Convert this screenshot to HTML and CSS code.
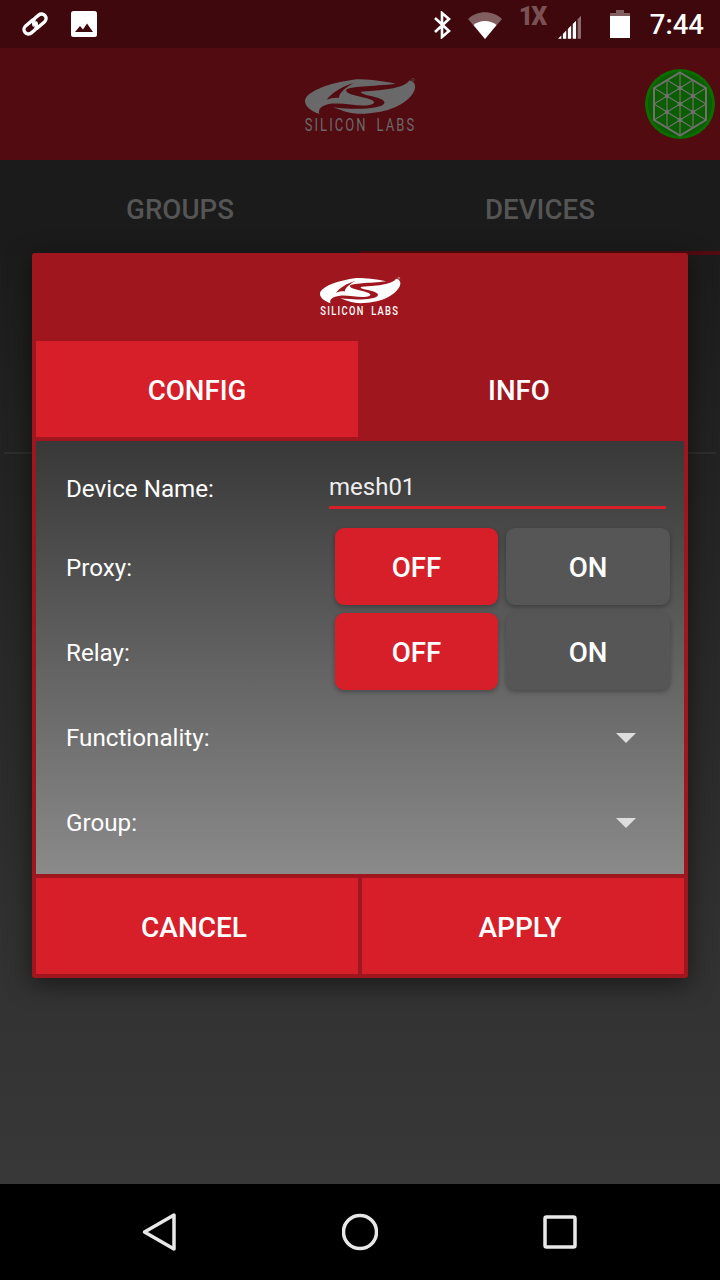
FILE: index.html
```html
<!DOCTYPE html>
<html lang="en">
<head>
    <meta charset="UTF-8">
    <meta name="viewport" content="width=device-width, initial-scale=1.0">
    <title>Silicon Labs Mesh</title>
    <link rel="stylesheet" href="styles.css">
</head>
<body>

<svg class="defs" width="0" height="0">
    <symbol id="swoosh" viewBox="47 22 331 112">
        <path fill-rule="evenodd" d="M318 40C270 30 220 26 195 27C125 36 47 62 47 92C47 108 68 122 90 130C84 116 98 102 128 99C165 96 205 108 235 104C258 100 258 92 240 86C210 76 165 72 170 58C175 48 250 48 318 40ZM112 88C125 68 155 50 192 38C168 52 150 66 148 82C135 80 122 83 112 88Z"/>
        <path d="M358 30C345 52 290 58 218 63C208 65 214 69 232 74C272 82 290 90 282 100C272 112 210 120 130 110C170 124 190 134 240 128C270 126 300 118 320 108C360 90 385 55 372 38C368 33 363 30 358 30Z"/>
        <circle cx="369" cy="28" r="4" fill="none" stroke="currentColor" stroke-width="1.500"/>
    </symbol>
</svg>

<div class="screen">
    <div class="status-bar">
        <div class="status-left">
            <svg class="ic-link" viewBox="0 0 28 24">
                <g transform="translate(14 12) rotate(-40)" fill="none" stroke="#fff" stroke-width="3.400" stroke-linecap="round">
                    <path d="M1 -4.500H-8.500a4.500 4.500 0 0 0 0 9H-4C-1 4.500 0 2 1.500 0"/>
                    <path d="M-1 4.500H8.500a4.500 4.500 0 0 0 0 -9H4C1 -4.500 0 -2 -1.500 0"/>
                </g>
            </svg>
            <svg class="ic-image" viewBox="0 0 26 26"><rect width="26" height="26" rx="2.500" fill="#fff"/><path d="M4 21L9 15L12 18.500L16 12.500L22 21Z" fill="#3e080c"/></svg>
        </div>
        <div class="status-right">
            <svg class="ic-bt" viewBox="0 0 20 28"><path d="M2 7L16 20L9 26V2L16 8L2 21" fill="none" stroke="#fff" stroke-width="2.600"/></svg>
            <svg class="ic-wifi" viewBox="0 0 36 29"><path d="M1 9C10 0 26 0 35 9L18 29Z" fill="#fff" fill-opacity=".35"/><path d="M6.500 15C13 9.500 23 9.500 29.500 15L18 29Z" fill="#fff"/></svg>
            <span class="net-type">1X</span>
            <svg class="ic-signal" viewBox="0 0 23.400 24"><path d="M0 24L3.400 20.600V24ZM5 24V19L8.400 15.600V24ZM10 24V14L13.400 10.600V24ZM15 24V9L18.400 5.600V24Z" fill="#fff"/><path d="M20 24V4L23.400 0.600V24Z" fill="#fff" fill-opacity=".4"/></svg>
            <svg class="ic-battery" viewBox="0 0 20 28"><path d="M6 0H14V3H20V8H0V3H6Z" fill="#fff" fill-opacity=".35"/><rect y="6" width="20" height="22" fill="#fff"/></svg>
            <span class="clock">7:44</span>
        </div>
    </div>

    <div class="app-bar">
        <div class="logo logo-dim">
            <svg class="swoosh"><use href="#swoosh"/></svg>
            <span class="logo-text">SILICON LABS</span>
        </div>
        <svg class="mesh-badge" viewBox="0 0 70 70">
            <circle cx="35" cy="35" r="35" fill="#0b6c00"/>
            <circle cx="35" cy="35" r="32" fill="#0c5c00"/>
            <g fill="none" stroke="#707070" stroke-width="1.200">
                <path d="M35 3.500L61 19V51L35 66.500L9 51V19Z" stroke-width="2"/>
                <path d="M22 11V59M35 3.500V66.500M48 11V59M9 19L61 51M22 11L61 35M9 35L48 59M9 51L61 19M22 59L61 35M9 35L48 11"/>
            </g>
            <g fill="#707070">
                <circle cx="22" cy="27" r="2.200"/><circle cx="35" cy="19" r="2.200"/><circle cx="48" cy="27" r="2.200"/>
                <circle cx="35" cy="35" r="2.200"/><circle cx="22" cy="43" r="2.200"/><circle cx="48" cy="43" r="2.200"/>
                <circle cx="35" cy="51" r="2.200"/>
            </g>
        </svg>
    </div>

    <div class="main-tabs">
        <div class="main-tab">GROUPS</div>
        <div class="main-tab main-tab-active">DEVICES</div>
    </div>

    <div class="content">
        <div class="bg-card"></div>
    </div>

    <div class="nav-bar">
        <svg class="nav-icon" viewBox="0 0 36 40"><path d="M2.500 20L32 3V37Z" fill="none" stroke="#e8e8e8" stroke-width="3.500" stroke-linejoin="round"/></svg>
        <svg class="nav-icon" viewBox="0 0 36 40"><circle cx="18" cy="20" r="16.500" fill="none" stroke="#e8e8e8" stroke-width="3.500"/></svg>
        <svg class="nav-icon" viewBox="0 0 36 40"><rect x="3" y="5" width="30" height="30" rx="1.500" fill="none" stroke="#e8e8e8" stroke-width="3.500"/></svg>
    </div>
</div>

<div class="dialog">
    <div class="dialog-head">
        <div class="logo logo-small">
            <svg class="swoosh"><use href="#swoosh"/></svg>
            <span class="logo-text">SILICON LABS</span>
        </div>
    </div>
    <div class="dialog-tabs">
        <div class="dialog-tab dialog-tab-active">CONFIG</div>
        <div class="dialog-tab">INFO</div>
    </div>
    <div class="dialog-body">
        <div class="row row-name">
            <span class="row-label">Device Name:</span>
            <div class="name-input">mesh01</div>
        </div>
        <div class="row row-toggle">
            <span class="row-label">Proxy:</span>
            <div class="toggle">
                <button class="toggle-btn toggle-on">OFF</button>
                <button class="toggle-btn">ON</button>
            </div>
        </div>
        <div class="row row-toggle">
            <span class="row-label">Relay:</span>
            <div class="toggle">
                <button class="toggle-btn toggle-on">OFF</button>
                <button class="toggle-btn">ON</button>
            </div>
        </div>
        <div class="row row-select">
            <span class="row-label">Functionality:</span>
            <span class="arrow"></span>
        </div>
        <div class="row row-select">
            <span class="row-label">Group:</span>
            <span class="arrow"></span>
        </div>
    </div>
    <div class="dialog-actions">
        <button class="action-btn">CANCEL</button>
        <button class="action-btn">APPLY</button>
    </div>
</div>

</body>
</html>
```

FILE: styles.css
```css
* {
    box-sizing: border-box;
}
body {
    margin: 0;
    width: 720px;
    height: 1280px;
    overflow: hidden;
    position: relative;
    font-family: Roboto, sans-serif;
    color: white;
}
button {
    font-family: inherit;
    border: none;
    color: white;
    padding: 0;
}
.defs {
    position: absolute;
}
.screen {
    height: 1280px;
    display: flex;
    flex-direction: column;
    background: #1c1c1c;
}

/* status bar */
.status-bar {
    height: 48px;
    background: #3e080c;
    display: flex;
    justify-content: space-between;
    align-items: center;
}
.status-left {
    display: flex;
    align-items: center;
    padding-left: 21px;
}
.ic-link {
    width: 28px;
    height: 24px;
    margin-right: 22px;
}
.ic-image {
    width: 26px;
    height: 26px;
}
.status-right {
    display: flex;
    align-items: center;
    padding-right: 16px;
    height: 48px;
}
.ic-bt {
    width: 20px;
    height: 28px;
    margin-right: 14px;
    margin-top: 1px;
}
.ic-wifi {
    width: 36px;
    height: 29px;
}
.net-type {
    font-size: 25px;
    font-weight: 900;
    letter-spacing: -2px;
    color: #7a5154;
    width: 26px;
    margin: -16px 0 0 16px;
}
.ic-signal {
    width: 23px;
    height: 24px;
    margin: 6px 0 0 13px;
}
.ic-battery {
    width: 20px;
    height: 28px;
    margin: 0 20px 0 29px;
}
.clock {
    font-size: 27.500px;
    font-weight: 500;
}

/* app bar */
.app-bar {
    height: 112px;
    background: #520b11;
    position: relative;
    display: flex;
    justify-content: center;
    padding-top: 29px;
}
.logo {
    display: flex;
    flex-direction: column;
    align-items: center;
}
.logo-dim {
    width: 112px;
    color: #696969;
}
.logo-dim .swoosh {
    width: 111px;
    height: 39px;
}
.logo-dim .logo-text {
    font-size: 18px;
    letter-spacing: 2.900px;
    word-spacing: 5px;
    line-height: 17px;
}
.swoosh {
    fill: currentColor;
    display: block;
}
.logo-text {
    white-space: nowrap;
    transform: scaleX(0.72);
}
.mesh-badge {
    position: absolute;
    left: 645px;
    top: 21px;
    width: 70px;
    height: 70px;
}

/* tabs behind the dialog */
.main-tabs {
    height: 95px;
    display: flex;
    background: #1b1b1b;
}
.main-tab {
    flex: 1;
    display: flex;
    align-items: center;
    justify-content: center;
    font-size: 27.700px;
    font-weight: 500;
    color: #555;
    padding-top: 3px;
}
.main-tab-active {
    border-bottom: 4px solid #520b11;
    padding-top: 8px;
}
.content {
    flex: 1;
    padding: 0 4px;
    background: linear-gradient(#1c1c1c, #383838);
}
.bg-card {
    height: 199px;
    border-bottom: 2px solid #2e2e2e;
}

/* nav bar */
.nav-bar {
    height: 96px;
    background: #000;
    display: flex;
    justify-content: space-between;
    align-items: center;
    padding: 0 142px;
}
.nav-icon {
    width: 36px;
    height: 40px;
}

/* dialog */
.dialog {
    position: absolute;
    left: 32px;
    top: 253px;
    width: 656px;
    height: 725px;
    padding: 0 4px 4px;
    background: #a0161e;
    border-radius: 3px;
    box-shadow: 0 6px 24px rgba(0, 0, 0, 0.5);
    display: flex;
    flex-direction: column;
}
.dialog-head {
    height: 88px;
    display: flex;
    justify-content: center;
    padding-top: 23px;
}
.logo-small {
    width: 82px;
    color: #fff;
}
.logo-small .swoosh {
    width: 81px;
    height: 29px;
}
.logo-small .logo-text {
    font-size: 13px;
    font-weight: 500;
    letter-spacing: 1.800px;
    word-spacing: 4px;
    line-height: 12px;
}
.dialog-tabs {
    height: 96px;
    display: flex;
    margin-bottom: 4px;
}
.dialog-tab {
    width: 322px;
    display: flex;
    align-items: center;
    justify-content: center;
    font-size: 27.700px;
    font-weight: 500;
    padding-top: 3px;
}
.dialog-tab-active {
    background: #d61f29;
}
.dialog-body {
    height: 433px;
    padding: 0 14px 0 30px;
    background: linear-gradient(#383838, #8a8a8a);
}
.row {
    display: flex;
    align-items: center;
    justify-content: space-between;
}
.row-label {
    font-size: 24.200px;
}
.row-name {
    height: 87px;
    padding-top: 8px;
    margin-right: 4px;
}
.name-input {
    width: 337px;
    height: 46px;
    margin-bottom: 6px;
    padding-top: 4px;
    font-size: 24px;
    line-height: 40px;
    border-bottom: 3px solid #d61f29;
    color: #eee;
}
.row-toggle {
    height: 85px;
    padding-bottom: 8px;
}
.row-toggle .row-label {
    padding-top: 2px;
}
.toggle {
    display: flex;
    gap: 8px;
}
.toggle-btn {
    width: 164px;
    height: 77px;
    padding-top: 1px;
    border-radius: 9px;
    background: #565656;
    font-size: 27.700px;
    font-weight: 500;
    box-shadow: 0 2px 5px rgba(0, 0, 0, 0.3);
}
.toggle-on {
    width: 163px;
    background: #d61f29;
}
.row-select {
    height: 85px;
    padding: 0 34px 6px 0;
}
.arrow {
    width: 0;
    height: 0;
    border-left: 10px solid transparent;
    border-right: 10px solid transparent;
    border-top: 10px solid #ddd;
}
.dialog-actions {
    margin-top: 4px;
    height: 96px;
    display: flex;
    gap: 4px;
}
.action-btn {
    flex: 1;
    background: #d61f29;
    font-size: 28px;
    font-weight: 500;
    padding: 2px 6px 0 0;
}
```
